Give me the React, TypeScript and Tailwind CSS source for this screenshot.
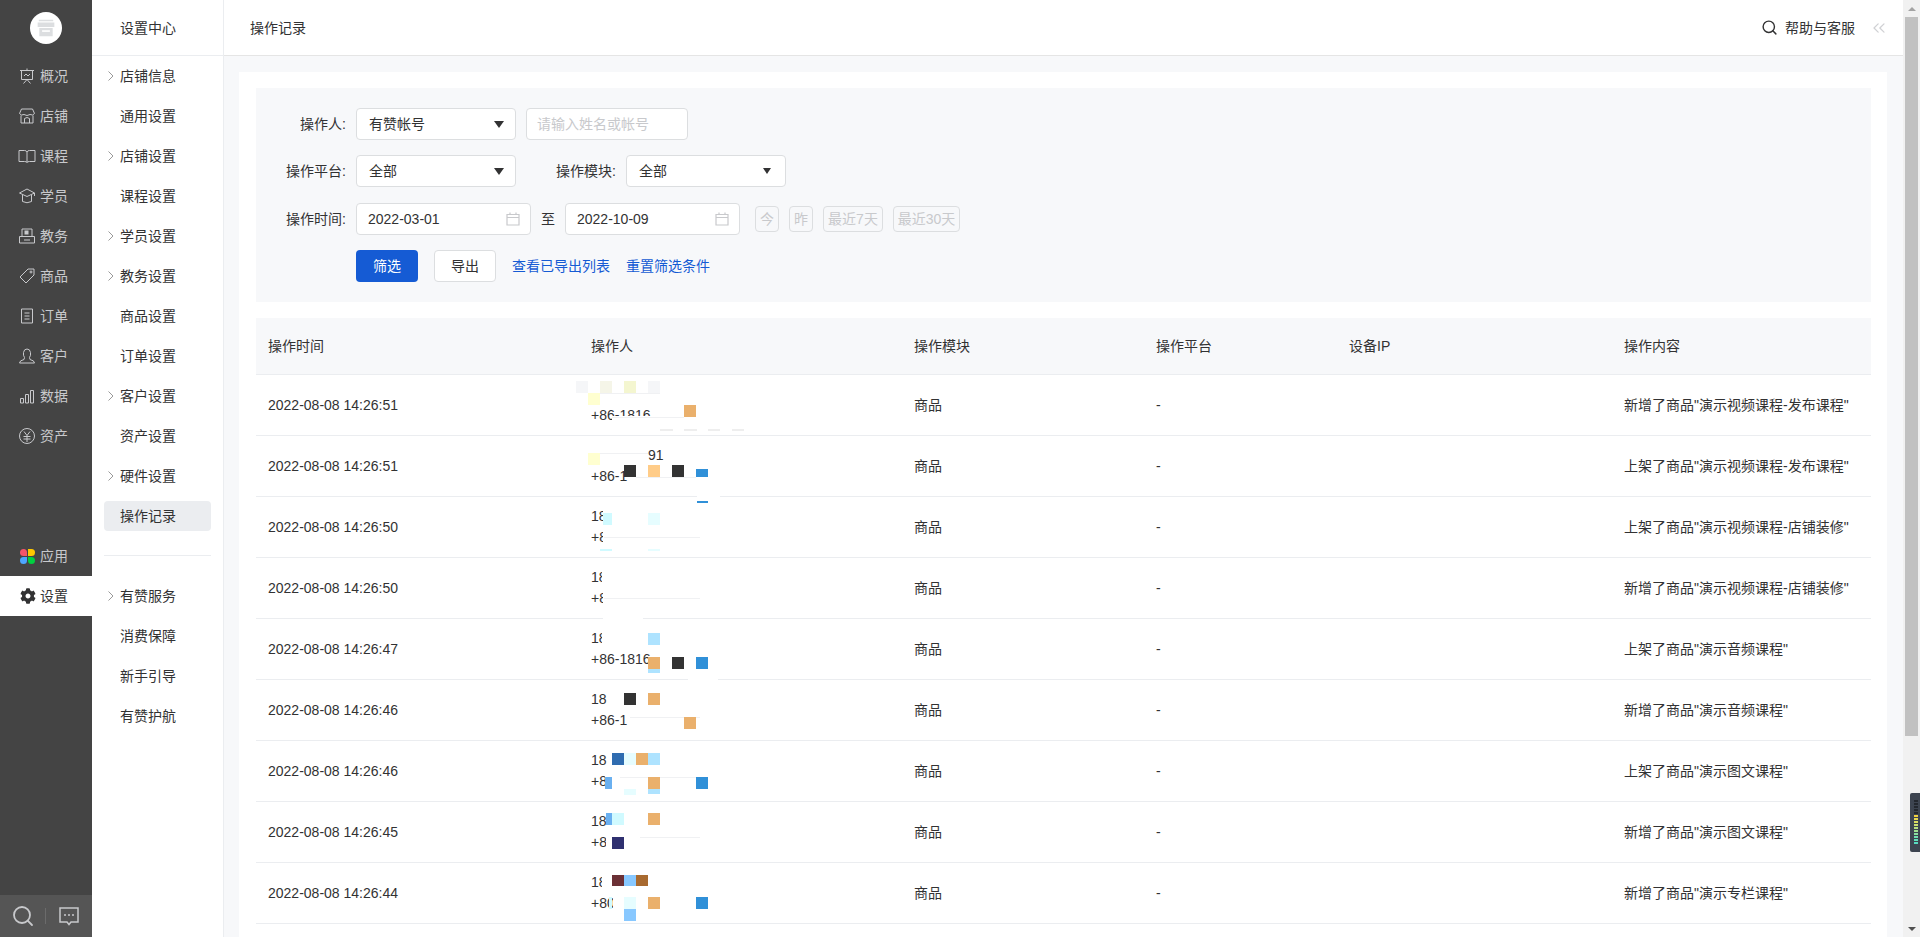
/**
 * 操作记录 page: dark app nav, settings sub nav, filter form and log table.
 */

import type { ReactNode } from 'react';
import { ChevronsLeft, Search } from 'lucide-react';
import { FaCog } from 'react-icons/fa';

const line = {
  fill: 'none',
  stroke: 'currentColor',
  strokeWidth: 1,
} as const;

function Glyph({ children }: { children: ReactNode }) {
  return (
    <svg viewBox="0 0 18 18" className="w-[18px] h-[18px] flex-none" {...line}>
      {children}
    </svg>
  );
}

const navItems: { label: string; icon: ReactNode }[] = [
  {
    label: '概况',
    icon: (
      <Glyph>
        <path d="M2 3.500H16M3.500 3.500V12.500H14.500V3.500M9 1.500V3.500M6 9L8 7L10 9L12 7M9 12.500L5.500 16.500M9 12.500L12.500 16.500" />
      </Glyph>
    ),
  },
  {
    label: '店铺',
    icon: (
      <Glyph>
        <path d="M3.500 2H14.500L16.500 6.500Q15 9 12 7.500Q9 9.500 6 7.500Q3 9 1.500 6.500ZM3 8.500V16H15V8.500M6.500 16V11.500Q9 9.500 11.500 11.500V16" />
      </Glyph>
    ),
  },
  {
    label: '课程',
    icon: (
      <Glyph>
        <path d="M1 3.500H6.500Q8.500 3.500 9 5Q9.500 3.500 11.500 3.500H17V14.500H11.500Q9.500 14.500 9 15.500Q8.500 14.500 6.500 14.500H1ZM9 5V15.500" />
      </Glyph>
    ),
  },
  {
    label: '学员',
    icon: (
      <Glyph>
        <path d="M9 2L1.500 6L9 9.500L16.500 6ZM4.500 8V14.500Q9 17 13.500 14.500V8M16.500 6V9" />
      </Glyph>
    ),
  },
  {
    label: '教务',
    icon: (
      <Glyph>
        <path d="M4 9.500V2H14V9.500M1.500 9.500H16.500V16H1.500ZM6 13H12" />
        <rect x="6.500" y="3.500" width="4" height="4" fill="currentColor" stroke="none" />
      </Glyph>
    ),
  },
  {
    label: '商品',
    icon: (
      <Glyph>
        <path d="M10 2H16V8L8 16L2 10Z" />
        <circle cx="13" cy="5" r="1" />
      </Glyph>
    ),
  },
  {
    label: '订单',
    icon: (
      <Glyph>
        <path d="M3.500 2H14.500V16H3.500ZM6.500 6H11.500M6.500 9H11.500M6.500 12H11.500" />
      </Glyph>
    ),
  },
  {
    label: '客户',
    icon: (
      <Glyph>
        <path d="M6.500 10.500Q5 8.500 5.500 5.500Q6 2 9 2Q12 2 12.500 5.500Q13 8.500 11.500 10.500L12 12.500Q16.500 13.500 16.500 16H1.500Q1.500 13.500 6 12.500Z" />
      </Glyph>
    ),
  },
  {
    label: '数据',
    icon: (
      <Glyph>
        <path d="M2.500 11.500H5.500V16H2.500ZM7.500 7.500H10.500V16H7.500ZM12.500 3.500H15.500V16H12.500Z" />
      </Glyph>
    ),
  },
  {
    label: '资产',
    icon: (
      <Glyph>
        <circle cx="9" cy="9" r="7.500" />
        <path d="M6 4.500L9 8.500L12 4.500M5.500 9.500H12.500M5.500 12H12.500M9 8.500V15" />
      </Glyph>
    ),
  },
];

const subTop: [string, boolean][] = [
  ['店铺信息', true],
  ['通用设置', false],
  ['店铺设置', true],
  ['课程设置', false],
  ['学员设置', true],
  ['教务设置', true],
  ['商品设置', false],
  ['订单设置', false],
  ['客户设置', true],
  ['资产设置', false],
  ['硬件设置', true],
];

const subBottom: [string, boolean][] = [
  ['有赞服务', true],
  ['消费保障', false],
  ['新手引导', false],
  ['有赞护航', false],
];

const ORANGE = '#eab06c';
const DARK = '#333333';
const BLUE = '#3090d8';
const SKY = '#aee3ff';
const ICE = '#d0faff';
const PALE = '#e6fdff';
const DOT = '#f0f1f3';

// mosaic marks over the redacted operator cell: [x, y, w, h, colour] in page coordinates
type Mark = [number, number, number, number, string];

interface LogRow {
  time: string;
  content: string;
  first: string;
  firstCut?: number;
  firstIndent?: number;
  second: string;
  secondCut?: number;
  marks: Mark[];
}

const rows: LogRow[] = [
  {
    time: '2022-08-08 14:26:51',
    content: '新增了商品"演示视频课程-发布课程"',
    first: '',
    second: '+86-1816',
    marks: [
      [612, 416, 90, 13, '#ffffff'],
      [600, 393, 60, 1, DOT],
      [612, 417, 72, 1, DOT],
      [576, 381, 12, 12, '#f5f6f8'],
      [600, 381, 12, 12, '#f5f5e8'],
      [624, 381, 12, 12, '#f4f6d0'],
      [648, 381, 12, 12, '#f5f6f8'],
      [588, 393, 12, 12, '#ffffd0'],
      [684, 405, 12, 12, ORANGE],
      [660, 429, 13, 2, '#eeeeee'],
      [684, 429, 13, 2, '#eeeeee'],
      [708, 429, 12, 2, '#eeeeee'],
      [732, 429, 12, 2, '#eeeeee'],
    ],
  },
  {
    time: '2022-08-08 14:26:51',
    content: '上架了商品"演示视频课程-发布课程"',
    first: '91',
    firstIndent: 57,
    second: '+86-1',
    marks: [
      [600, 453, 48, 1, DOT],
      [636, 477, 60, 1, DOT],
      [588, 453, 12, 12, '#ffffd0'],
      [624, 465, 12, 12, DARK],
      [648, 465, 12, 12, '#ffcc88'],
      [672, 465, 12, 12, DARK],
      [696, 469, 12, 8, BLUE],
      [697, 495, 23, 3, '#ffffff'],
    ],
  },
  {
    time: '2022-08-08 14:26:50',
    content: '上架了商品"演示视频课程-店铺装修"',
    first: '18',
    firstCut: 12,
    second: '+8',
    secondCut: 12,
    marks: [
      [697, 501, 11, 2, BLUE],
      [603, 513, 9, 12, ICE],
      [648, 513, 12, 12, PALE],
      [604, 537, 96, 1, DOT],
      [600, 549, 12, 2, ICE],
      [648, 549, 12, 2, PALE],
    ],
  },
  {
    time: '2022-08-08 14:26:50',
    content: '新增了商品"演示视频课程-店铺装修"',
    first: '18',
    firstCut: 11,
    second: '+8',
    secondCut: 12,
    marks: [
      [604, 598, 96, 1, DOT],
      [603, 617, 40, 2, '#ffffff'],
    ],
  },
  {
    time: '2022-08-08 14:26:47',
    content: '上架了商品"演示音频课程"',
    first: '18',
    firstCut: 11,
    second: '+86-1816',
    marks: [
      [648, 633, 12, 12, SKY],
      [648, 657, 12, 12, ORANGE],
      [672, 657, 12, 12, DARK],
      [696, 657, 12, 12, BLUE],
      [648, 669, 12, 4, SKY],
      [688, 678, 30, 2, '#ffffff'],
    ],
  },
  {
    time: '2022-08-08 14:26:46',
    content: '新增了商品"演示音频课程"',
    first: '18',
    second: '+86-1',
    marks: [
      [624, 693, 12, 12, DARK],
      [648, 693, 12, 12, ORANGE],
      [630, 717, 70, 1, DOT],
      [684, 717, 12, 12, ORANGE],
    ],
  },
  {
    time: '2022-08-08 14:26:46',
    content: '上架了商品"演示图文课程"',
    first: '18',
    second: '+8',
    secondCut: 14,
    marks: [
      [612, 753, 12, 12, '#2f6cb0'],
      [624, 753, 12, 12, PALE],
      [636, 753, 12, 12, ORANGE],
      [648, 753, 12, 12, SKY],
      [620, 777, 76, 1, DOT],
      [605, 777, 7, 12, '#6ab0f0'],
      [648, 777, 12, 12, ORANGE],
      [696, 777, 12, 12, BLUE],
      [624, 789, 12, 6, PALE],
      [648, 789, 12, 5, SKY],
    ],
  },
  {
    time: '2022-08-08 14:26:45',
    content: '新增了商品"演示图文课程"',
    first: '18',
    second: '+8',
    secondCut: 15,
    marks: [
      [606, 813, 6, 12, '#6ab0f0'],
      [612, 813, 12, 12, ICE],
      [648, 813, 12, 12, ORANGE],
      [612, 837, 12, 12, '#2f3070'],
      [640, 837, 60, 1, DOT],
    ],
  },
  {
    time: '2022-08-08 14:26:44',
    content: '新增了商品"演示专栏课程"',
    first: '18',
    firstCut: 11,
    second: '+80',
    secondCut: 22,
    marks: [
      [612, 875, 12, 11, '#6b3035'],
      [624, 875, 12, 11, '#88c8ff'],
      [636, 875, 12, 11, '#a86a30'],
      [609, 897, 3, 12, ICE],
      [624, 897, 12, 12, PALE],
      [648, 897, 12, 12, ORANGE],
      [696, 897, 12, 12, BLUE],
      [624, 909, 12, 12, '#88c8ff'],
    ],
  },
];

function SubItem({ label, arrow, active }: { label: string; arrow: boolean; active?: boolean }) {
  return (
    <div className="h-10 flex items-center mx-3">
      <div className={`w-full h-[30px] flex items-center pl-1 rounded-sm ${active ? 'bg-[#ebedf0]' : ''}`}>
        <span className="w-3 flex-none flex items-center">
          {arrow && (
            <svg viewBox="0 0 6 10" className="w-[6px] h-[10px]" fill="none" stroke="#999999">
              <path d="M0.500 0.500L5 5L0.500 9.500" />
            </svg>
          )}
        </span>
        <span className="text-sm text-[#323233]">{label}</span>
      </div>
    </div>
  );
}

function AppNav() {
  return (
    <aside className="w-[92px] flex-none bg-[#444444] flex flex-col text-[#c8c9cc]">
      <div className="h-14 flex-none flex items-center justify-center">
        <div className="w-8 h-8 rounded-full bg-white flex items-center justify-center text-[#dcdee0]">
          <svg viewBox="0 0 18 18" className="w-5 h-5" fill="currentColor">
            <path d="M2.500 1.500H15.500V3H2.500ZM1.500 4H16.500V8H1.500ZM3 9H15V16.500H3Z" />
            <path d="M5.500 11H12.500V12.500H5.500Z" fill="#ffffff" />
          </svg>
        </div>
      </div>
      {navItems.map((item) => (
        <div key={item.label} className="h-10 flex items-center gap-1 pl-[18px]">
          {item.icon}
          <span className="text-sm">{item.label}</span>
        </div>
      ))}
      <div className="flex-1" />
      <div className="h-10 flex items-center gap-[5px] pl-5">
        <svg viewBox="0 0 15 15" className="w-[15px] h-[15px] flex-none">
          <path d="M3.500 0A3.500 3.500 0 0 1 7 3.500V7H3.500A3.500 3.500 0 0 1 3.500 0Z" fill="#f6546a" />
          <path d="M8 0H11.500A3.500 3.500 0 0 1 11.500 7H8Z" fill="#ffc700" />
          <path d="M7 8V11.500A3.500 3.500 0 0 1 0 11.500A3.500 3.500 0 0 1 3.500 8Z" fill="#4da6ff" />
          <path d="M8 8H11.500A3.500 3.500 0 0 1 11.500 15A3.500 3.500 0 0 1 8 11.500Z" fill="#00d040" />
        </svg>
        <span className="text-sm">应用</span>
      </div>
      <div className="h-10 flex items-center gap-1 pl-5 bg-white text-[#323233]">
        <FaCog className="w-4 h-4 flex-none" />
        <span className="text-sm">设置</span>
      </div>
      <div className="h-[279px]" />
      <div className="h-[42px] flex-none bg-[#555555] flex items-center pl-[11px]">
        <Search className="w-6 h-6" strokeWidth={1.8} />
        <div className="w-px h-4 bg-[#6b6b6b] ml-[10px]" />
        <svg viewBox="0 0 20 19" className="w-5 h-[19px] ml-[13px]" fill="none" stroke="currentColor" strokeWidth="1.500">
          <path d="M1 1H19V15H12L10 17.500L8 15H1Z" />
          <circle cx="6" cy="8" r="1" fill="currentColor" stroke="none" />
          <circle cx="10" cy="8" r="1" fill="currentColor" stroke="none" />
          <circle cx="14" cy="8" r="1" fill="currentColor" stroke="none" />
        </svg>
      </div>
    </aside>
  );
}

function SubNav() {
  return (
    <aside className="w-[132px] flex-none bg-white border-r border-[#ebedf0]">
      <div className="h-14 flex items-center pl-7 border-b border-[#ebedf0] text-sm text-[#323233]">设置中心</div>
      {subTop.map(([label, arrow]) => (
        <SubItem key={label} label={label} arrow={arrow} />
      ))}
      <SubItem label="操作记录" arrow={false} active />
      <div className="h-px bg-[#ebedf0] mx-3 mt-[19px] mb-5" />
      {subBottom.map(([label, arrow]) => (
        <SubItem key={label} label={label} arrow={arrow} />
      ))}
    </aside>
  );
}

function Label({ width, children }: { width: string; children: ReactNode }) {
  return <label className={`${width} flex-none text-right text-sm text-[#323233]`}>{children}</label>;
}

function SelectBox({ value, small }: { value: string; small?: boolean }) {
  return (
    <div className="w-40 h-8 flex-none bg-white border border-[#dcdee0] rounded-sm flex items-center justify-between pl-3 text-sm text-[#323233]">
      <span>{value}</span>
      {small ? (
        <span className="mr-[14px] w-0 h-0 border-x-[4px] border-x-transparent border-t-[6px] border-t-[#323233]" />
      ) : (
        <span className="mr-[11px] w-0 h-0 border-x-[5px] border-x-transparent border-t-[7px] border-t-[#323233]" />
      )}
    </div>
  );
}

function DateBox({ value }: { value: string }) {
  return (
    <div className="w-[175px] h-8 flex-none bg-white border border-[#dcdee0] rounded-sm flex items-center justify-between pl-[11px] pr-[10px] text-sm text-[#323233]">
      <span>{value}</span>
      <svg viewBox="0 0 14 14" className="w-[14px] h-[14px]" fill="none" stroke="#c8c9cc" strokeWidth="1.200">
        <path d="M1 2.500H13V13H1ZM1 5.500H13M4 0.500V2.500M10 0.500V2.500" />
      </svg>
    </div>
  );
}

function QuickDate({ label, width }: { label: string; width: string }) {
  return (
    <button className={`${width} h-[26px] flex-none border border-[#dcdee0] rounded-sm text-sm text-[#c8c9cc] flex items-center justify-center`}>
      {label}
    </button>
  );
}

function FilterForm() {
  return (
    <div className="h-[214px] bg-[#f7f8fa] pt-5 mb-4">
      <div className="flex items-center h-8">
        <Label width="w-[100px] pr-[10px]">操作人:</Label>
        <SelectBox value="有赞帐号" />
        <input
          placeholder="请输入姓名或帐号"
          className="w-[162px] h-8 ml-[10px] bg-white border border-[#dcdee0] rounded-sm px-[10px] text-sm placeholder:text-[#c8c9cc] outline-none"
        />
      </div>
      <div className="flex items-center h-8 mt-[15px]">
        <Label width="w-[100px] pr-[10px]">操作平台:</Label>
        <SelectBox value="全部" />
        <Label width="w-[110px] pr-[10px]">操作模块:</Label>
        <SelectBox value="全部" small />
      </div>
      <div className="flex items-center h-8 mt-4">
        <Label width="w-[100px] pr-[10px]">操作时间:</Label>
        <DateBox value="2022-03-01" />
        <span className="w-[34px] text-center text-sm text-[#323233]">至</span>
        <DateBox value="2022-10-09" />
        <div className="flex items-center gap-[10px] ml-[15px]">
          <QuickDate label="今" width="w-6" />
          <QuickDate label="昨" width="w-6" />
          <QuickDate label="最近7天" width="w-[60px]" />
          <QuickDate label="最近30天" width="w-[67px]" />
        </div>
      </div>
      <div className="flex items-center gap-4 h-8 mt-[15px] ml-[100px] text-sm">
        <button className="w-[62px] h-8 bg-[#155bd4] rounded-sm text-white">筛选</button>
        <button className="w-[62px] h-8 bg-white border border-[#dcdee0] rounded-sm text-[#323233]">导出</button>
        <a className="text-[#155bd4]">查看已导出列表</a>
        <a className="text-[#155bd4]">重置筛选条件</a>
      </div>
    </div>
  );
}

function Operator({ row, index }: { row: LogRow; index: number }) {
  const rowTop = 375 + index * 61;
  // white patches hide the redacted part of each line, colour blocks go over them
  const cuts: Mark[] = [];
  if (row.firstCut) cuts.push([591 + row.firstCut, rowTop + 9, 14, 21, '#ffffff']);
  if (row.secondCut) cuts.push([591 + row.secondCut, rowTop + 30, 16, 21, '#ffffff']);
  return (
    <td className="relative px-3 border-b border-[#ebedf0] leading-[21px]">
      <div className="h-[21px]" style={{ marginLeft: row.firstIndent ?? 0 }}>
        {row.first}
      </div>
      <div className="h-[21px]">{row.second}</div>
      {[...cuts, ...row.marks].map(([x, y, w, h, color], i) => (
        <span
          key={i}
          className="absolute"
          style={{ left: x - 579, top: y - rowTop, width: w, height: h, backgroundColor: color }}
        />
      ))}
    </td>
  );
}

function LogTable() {
  const headers = ['操作时间', '操作人', '操作模块', '操作平台', '设备IP', '操作内容'];
  return (
    <table className="w-full table-fixed border-separate border-spacing-0 text-sm text-[#323233]">
      <colgroup>
        <col className="w-[323px]" />
        <col className="w-[323px]" />
        <col className="w-[242px]" />
        <col className="w-[193px]" />
        <col className="w-[275px]" />
        <col />
      </colgroup>
      <thead>
        <tr>
          {headers.map((h) => (
            <th key={h} className="h-[57px] px-3 bg-[#f7f8fa] border-b border-[#ebedf0] text-left font-normal">
              {h}
            </th>
          ))}
        </tr>
      </thead>
      <tbody>
        {rows.map((row, i) => (
          <tr key={i} className="h-[61px]">
            <td className="px-3 border-b border-[#ebedf0]">{row.time}</td>
            <Operator row={row} index={i} />
            <td className="px-3 border-b border-[#ebedf0]">商品</td>
            <td className="px-3 border-b border-[#ebedf0]">-</td>
            <td className="px-3 border-b border-[#ebedf0]" />
            <td className="px-3 border-b border-[#ebedf0] whitespace-nowrap">{row.content}</td>
          </tr>
        ))}
      </tbody>
    </table>
  );
}

function PageScrollbar() {
  const meter = ['d', 'd', 'd', 'd', 'd', '#f0d040', '#e8d850', '#dcdc60', '#ccdf70', '#b8e080', '#a0e090', '#88e0a0', '#70e0b0', '#60e0b8', '#58dcc0'];
  return (
    <div className="relative w-[17px] flex-none bg-[#f1f1f1] flex flex-col items-center">
      <div className="h-[17px] flex-none flex items-center justify-center">
        <span className="w-0 h-0 border-x-[4px] border-x-transparent border-b-[4px] border-b-[#a3a3a3]" />
      </div>
      <div className="h-[719px] w-[13px] bg-[#c1c1c1]" />
      <div className="flex-1" />
      <div className="h-[17px] flex-none flex items-center justify-center">
        <span className="w-0 h-0 border-x-[4px] border-x-transparent border-t-[4px] border-t-[#505050]" />
      </div>
      {/* floating audio meter tab over the scrollbar */}
      <div className="absolute right-0 top-[793px] w-[10px] h-[59px] bg-[#3d4450] rounded-l-[2px] pl-1 pt-[7px] flex flex-col gap-px">
        {meter.map((c, i) => (
          <span
            key={i}
            className="block w-1 h-[2px]"
            style={{ backgroundColor: c === 'd' ? '#23272e' : c }}
          />
        ))}
      </div>
    </div>
  );
}

export default function App() {
  return (
    <div className="flex h-[937px] overflow-hidden bg-white [font-family:'Liberation_Sans','Noto_Sans_CJK_SC',sans-serif]">
      <AppNav />
      <SubNav />
      <main className="flex-1 min-w-0 flex flex-col bg-[#f7f8fa] overflow-hidden">
        <header className="h-14 flex-none bg-white border-b border-[#e5e5e5] flex items-center justify-between pl-[26px] pr-[14px] text-sm text-[#323233]">
          <span>操作记录</span>
          <div className="flex items-center">
            <Search className="w-[17px] h-[17px]" strokeWidth={2} />
            <span className="ml-[7px]">帮助与客服</span>
            <ChevronsLeft className="w-5 h-5 ml-[14px] text-[#d0d1d4]" strokeWidth={1.5} />
          </div>
        </header>
        <div className="flex-1 min-h-0 pt-4 pl-[15px] pr-4">
          <div className="bg-white h-full pt-4 pl-[17px] pr-4">
            <FilterForm />
            <LogTable />
          </div>
        </div>
      </main>
      <PageScrollbar />
    </div>
  );
}
